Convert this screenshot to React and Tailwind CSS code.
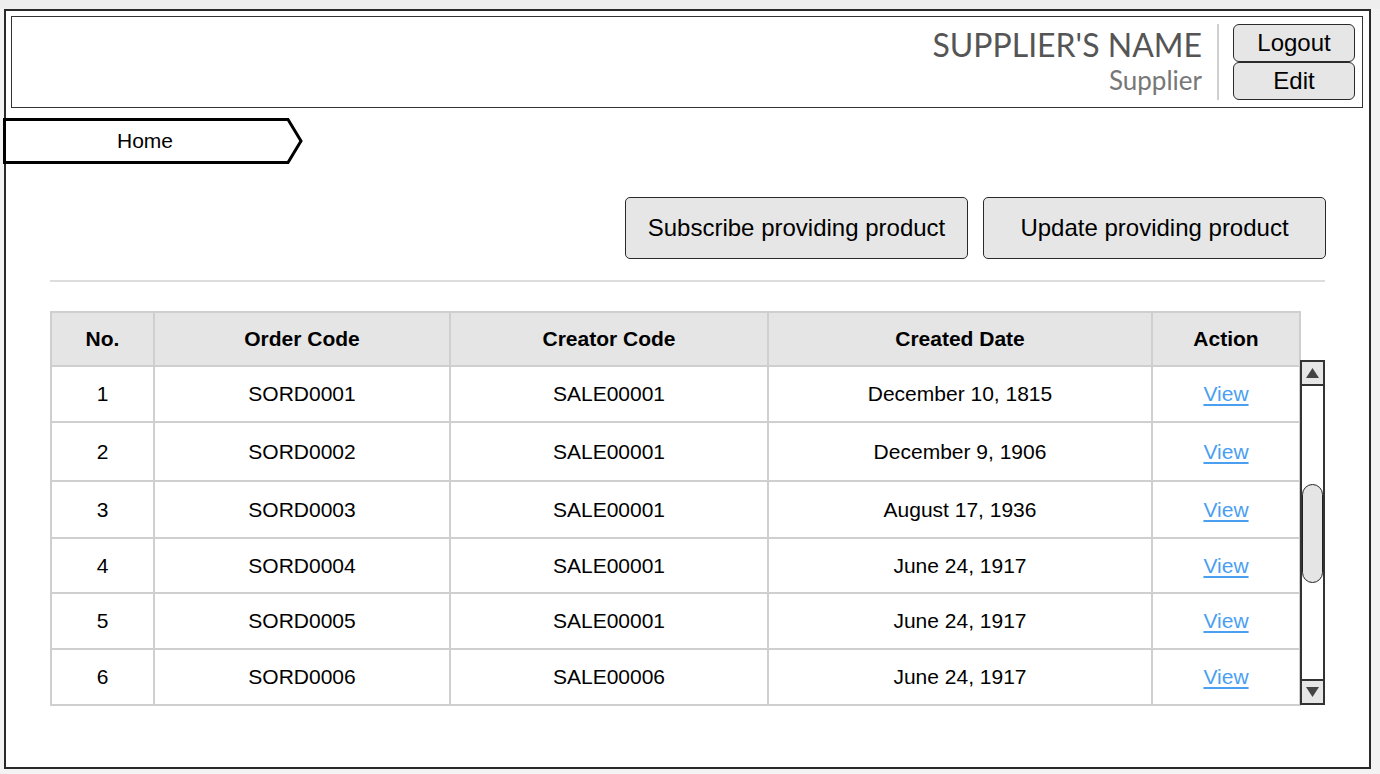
import React from "react";

const rows = [
  { no: 1, order: "SORD0001", creator: "SALE00001", date: "December 10, 1815", h: "h-[56px]" },
  { no: 2, order: "SORD0002", creator: "SALE00001", date: "December 9, 1906", h: "h-[59px]" },
  { no: 3, order: "SORD0003", creator: "SALE00001", date: "August 17, 1936", h: "h-[57px]" },
  { no: 4, order: "SORD0004", creator: "SALE00001", date: "June 24, 1917", h: "h-[55px]" },
  { no: 5, order: "SORD0005", creator: "SALE00001", date: "June 24, 1917", h: "h-[56px]" },
  { no: 6, order: "SORD0006", creator: "SALE00006", date: "June 24, 1917", h: "h-[56px]" },
];

const cols = ["w-[103px]", "w-[296px]", "w-[318px]", "w-[384px]", "w-[146px]"];

const App = () => {
  return (
    <div
      className="w-[1380px] h-[774px] bg-[#f3f3f3] overflow-hidden text-black"
      style={{ fontFamily: '"Liberation Sans", Arial, sans-serif' }}
    >
      <div className="h-[9px] bg-[#eeeeee]" />
      <div className="ml-[4px] w-[1367px] h-[760px] bg-white border-2 border-[#2a2a2a] flex flex-col">
        {/* Header */}
        <div className="mt-[5px] ml-[5px] w-[1352px] h-[92px] border-[1.5px] border-[#333] flex justify-end items-start pr-[7px] pt-[7px]">
          <div className="flex flex-col items-end mt-[3px]" style={{ fontFamily: "Lato, sans-serif" }}>
            <div className="text-[32px] leading-[36px] text-[#555]">SUPPLIER'S NAME</div>
            <div className="text-[26px] leading-[32px] text-[#777] mt-[1px]">Supplier</div>
          </div>
          <div className="w-[2px] h-[76px] bg-[#cfcfcf] ml-[15px] mr-[14px]" />
          <div className="flex flex-col">
            <button className="w-[122px] h-[38px] bg-[#e6e6e6] border-[1.5px] border-[#2a2a2a] rounded-[6px] text-[24px] leading-none">
              Logout
            </button>
            <button className="w-[122px] h-[38px] bg-[#e6e6e6] border-[1.5px] border-[#2a2a2a] rounded-[6px] text-[24px] leading-none">
              Edit
            </button>
          </div>
        </div>

        {/* Breadcrumb */}
        <div className="relative mt-[10px] -ml-[3px] w-[300px] h-[46px] flex items-center">
          <svg className="absolute inset-0" width="300" height="46" viewBox="0 0 300 46">
            <polygon
              points="1.5,1.5 285,1.5 298,23 285,44.5 1.5,44.5"
              fill="white"
              stroke="#000"
              strokeWidth="3"
            />
          </svg>
          <span className="relative w-[284px] text-center text-[21px]">Home</span>
        </div>

        {/* Action buttons */}
        <div className="flex justify-end gap-[15px] mt-[33px] mr-[43px]">
          <button className="w-[343px] h-[62px] bg-[#e6e6e6] border border-[#2a2a2a] rounded-[5px] text-[24px]">
            Subscribe providing product
          </button>
          <button className="w-[343px] h-[62px] bg-[#e6e6e6] border border-[#2a2a2a] rounded-[5px] text-[24px]">
            Update providing product
          </button>
        </div>
        <div className="ml-[44px] w-[1275px] h-[2px] bg-[#dddddd] mt-[21px]" />

        {/* Table + scrollbar */}
        <div className="flex items-start ml-[44px] mt-[29px]">
          <div className="w-[1251px] border-2 border-[#cfcfcf]">
            <div className="flex h-[52px] bg-[#e5e5e5] text-[21px] font-bold">
              {["No.", "Order Code", "Creator Code", "Created Date", "Action"].map((t, i) => (
                <div
                  key={t}
                  className={`${cols[i]} flex items-center justify-center ${i < 4 ? "border-r-2 border-[#cfcfcf]" : ""}`}
                >
                  {t}
                </div>
              ))}
            </div>
            {rows.map((r) => (
              <div key={r.no} className={`flex ${r.h} border-t-2 border-[#cfcfcf] text-[21px]`}>
                <div className={`${cols[0]} flex items-center justify-center border-r-2 border-[#cfcfcf]`}>{r.no}</div>
                <div className={`${cols[1]} flex items-center justify-center border-r-2 border-[#cfcfcf]`}>{r.order}</div>
                <div className={`${cols[2]} flex items-center justify-center border-r-2 border-[#cfcfcf]`}>{r.creator}</div>
                <div className={`${cols[3]} flex items-center justify-center border-r-2 border-[#cfcfcf]`}>{r.date}</div>
                <div className={`${cols[4]} flex items-center justify-center`}>
                  <a className="text-[#4a9ff0] underline underline-offset-[3px] cursor-pointer">View</a>
                </div>
              </div>
            ))}
          </div>

          {/* Scrollbar */}
          <div className="-ml-[1px] mt-[49px] w-[25px] h-[345px] border-2 border-[#333] bg-white flex flex-col">
            <div className="h-[24px] bg-[#e6e6e6] border-b-2 border-[#333] flex items-center justify-center">
              <svg width="15" height="12" viewBox="0 0 15 12">
                <polygon points="7.5,1 14,11 1,11" fill="#444" />
              </svg>
            </div>
            <div className="flex-1 flex flex-col">
              <div className="h-[98px]" />
              <div className="h-[99px] bg-[#e5e5e5] border-[1.5px] border-[#222] rounded-full" />
            </div>
            <div className="h-[24px] bg-[#e6e6e6] border-t-2 border-[#333] flex items-center justify-center">
              <svg width="15" height="12" viewBox="0 0 15 12">
                <polygon points="1,1 14,1 7.5,11" fill="#444" />
              </svg>
            </div>
          </div>
        </div>
      </div>
    </div>
  );
};

export default App;
